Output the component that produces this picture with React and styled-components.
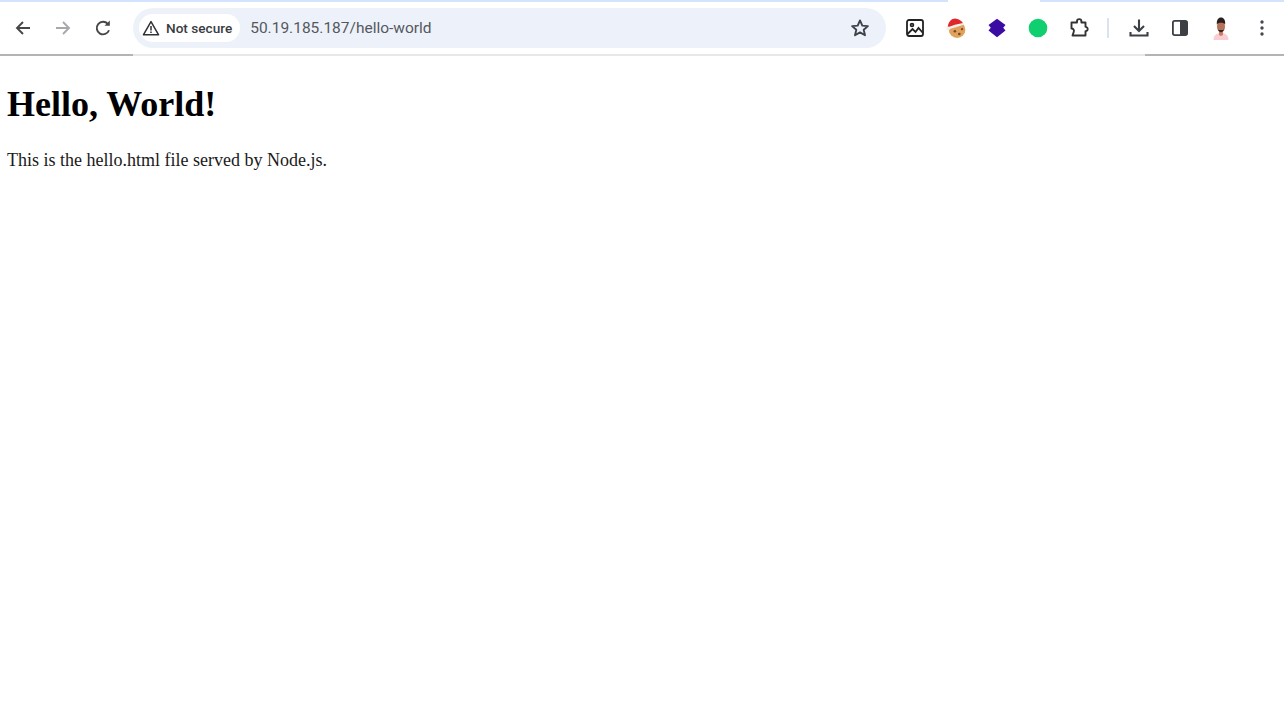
import styled, { createGlobalStyle } from "styled-components";

const GlobalStyle = createGlobalStyle`
  html, body {
    margin: 0;
    padding: 0;
    background: #fff;
  }
`;

const Page = styled.div`
  width: 1284px;
  height: 724px;
  overflow: hidden;
  background: #fff;
`;

const TabStrip = styled.div`
  height: 2px;
  display: grid;
  grid-template-columns: 948px 92px 1fr;
  background: #d3e3fd;
`;

const ActiveTab = styled.div`
  grid-column: 2;
  background: #fff;
`;

const Toolbar = styled.div`
  height: 52px;
  display: flex;
  align-items: center;
  padding: 0 0 0 3px;
  box-sizing: border-box;
  background: #fff;
`;

const Divider = styled.div`
  height: 2px;
  display: grid;
  grid-template-columns: 133px 1012px 1fr;
`;

const DividerPart = styled.div`
  background: ${(p) => (p.$dark ? "#b4b4b4" : "#e8e8e8")};
`;

const NavButton = styled.div`
  width: 40px;
  height: 40px;
  flex: none;
  display: flex;
  align-items: center;
  justify-content: center;
  margin-right: ${(p) => p.$gap || 0}px;
  color: ${(p) => p.$color || "#474747"};
`;

const Omnibox = styled.div`
  width: 753px;
  height: 40px;
  flex: none;
  margin: 0 9px 0 10px;
  padding: 0 6px;
  box-sizing: border-box;
  display: flex;
  align-items: center;
  border-radius: 20px;
  background: #edf2fa;
`;

const SecurityChip = styled.div`
  height: 28px;
  padding: 0 8px 0 3px;
  display: flex;
  align-items: center;
  gap: 6px;
  border-radius: 14px;
  background: #fff;
  font: 500 13.6px "Roboto", sans-serif;
  color: #3a3c41;
`;

const Url = styled.div`
  flex: 1;
  margin-left: 10px;
  font: 400 15.5px "Roboto", sans-serif;
  color: #55585d;
`;

const Separator = styled.div`
  width: 2px;
  height: 20px;
  flex: none;
  margin: 0 10px 0 8px;
  background: #d8e2f3;
`;

const Content = styled.main`
  padding: 0 7px;
  font-family: "Liberation Serif", "Times New Roman", serif;
  color: #000;
`;

const Heading = styled.h1`
  margin: 27px 0 0;
  font-size: 36px;
  line-height: 42px;
  font-weight: 700;
`;

const Paragraph = styled.p`
  margin: 25px 0 0;
  font-size: 18px;
  line-height: 21px;
  color: #1a1a1a;
`;

const Arrow = ({ back }) => (
  <svg width="18" height="18" viewBox="0 0 18 18" fill="none" stroke="currentColor" strokeWidth="1.9">
    {back ? <path d="M16 9H3M9 3L3 9l6 6" /> : <path d="M2 9h13M9 3l6 6-6 6" />}
  </svg>
);

const Reload = () => (
  <svg width="18" height="18" viewBox="0 0 18 18" fill="none" stroke="currentColor" strokeWidth="1.9">
    <path d="M15 11.200A6.300 6.300 0 1 1 13.800 4.900" />
    <path d="M15.800 1.500v5.300h-5.300z" fill="currentColor" stroke="none" />
  </svg>
);

const Warning = () => (
  <svg width="18" height="16" viewBox="0 0 18 16" fill="none" stroke="#2f3136" strokeWidth="1.5">
    <path d="M9 1.600L1.400 14.800h15.200z" strokeLinejoin="round" />
    <path d="M9 6v4.600M9 11.500v1.500" />
  </svg>
);

const Star = () => (
  <svg width="20" height="20" viewBox="0 0 20 20" fill="none" stroke="#3f4247" strokeWidth="1.9">
    <path d="M10 2.400l2.300 5.200 5.600.5-4.200 3.700 1.300 5.500-5-2.900-5 2.900 1.300-5.500L2.100 8.100l5.600-.5z" strokeLinejoin="round" />
  </svg>
);

const ImageIcon = () => (
  <svg width="20" height="20" viewBox="0 0 20 20" fill="none" stroke="#222" strokeWidth="1.8">
    <rect x="2" y="2" width="16" height="16" rx="2" />
    <circle cx="7" cy="7" r="1.400" />
    <path d="M2.500 16l5-5 3 3 3-4 4.500 5" />
  </svg>
);

const Cookie = () => (
  <svg width="22" height="22" viewBox="0 0 20 20">
    <circle cx="11" cy="11.500" r="7.500" fill="#dfa25c" />
    <circle cx="9" cy="13" r="1.200" fill="#7a4a20" />
    <circle cx="13" cy="15.500" r="1.200" fill="#7a4a20" />
    <circle cx="15.500" cy="11" r="1.100" fill="#7a4a20" />
    <path d="M2.500 9C3 4 6.500 1 10 1.500c3 .5 5.500 2 6.500 4.500L8 9z" fill="#e0282a" />
    <path d="M2 9.500l7-2.500 7.500-1.500.5 1.500-8 2.500-5 1.500z" fill="#f4efe9" />
    <circle cx="2.800" cy="10.500" r="1.800" fill="#f4efe9" />
  </svg>
);

const Layers = () => (
  <svg width="20" height="20" viewBox="0 0 20 20" fill="#3a0ca3">
    <path d="M10 .8L18.500 7 16.200 9.800l2.300 2.700L10 19.200 1.500 12.500l2.300-2.700L1.500 7z" />
  </svg>
);

const GreenDot = () => (
  <svg width="20" height="20" viewBox="0 0 20 20">
    <circle cx="10" cy="10" r="9.300" fill="#0fcf6e" />
  </svg>
);

const Puzzle = () => (
  <svg width="20" height="20" viewBox="0 0 20 20" fill="none" stroke="#333" strokeWidth="1.900">
    <path d="M2.500 4.500H8V3.300a2.200 2.200 0 0 1 4.400 0v1.200h4.100v4.300h.6a2.300 2.300 0 0 1 0 4.400h-.6v4.300H3.500l1.300-3.800c.7-2-.9-3.400-2.300-3.200z" strokeLinejoin="round" />
  </svg>
);

const Download = () => (
  <svg width="20" height="20" viewBox="0 0 20 20" fill="none" stroke="#3c3f44" strokeWidth="2.100">
    <path d="M10 1.500v11M5 8l5 5 5-5M1.500 14v3.500h17V14" />
  </svg>
);

const SidePanel = () => (
  <svg width="20" height="20" viewBox="0 0 20 20">
    <rect x="2.900" y="2.900" width="14.200" height="14.200" rx="1.800" fill="none" stroke="#3c3f44" strokeWidth="1.800" />
    <rect x="10" y="2.900" width="7.100" height="14.200" rx="1" fill="#3c3f44" />
  </svg>
);

const Avatar = () => (
  <svg width="24" height="24" viewBox="0 0 24 24">
    <path d="M4.500 24c0-4.500 3-7 7.500-7s7.500 2.500 7.500 7z" fill="#f9cdd2" />
    <path d="M10 15h4v4l-2 1-2-1z" fill="#c4806c" />
    <ellipse cx="12" cy="10.500" rx="4" ry="6" fill="#b5725a" />
    <path d="M7.800 8.500C7.500 3 10 1.500 12 1.500s4.500 1.500 4.200 7C15 6 9 6 7.800 8.500z" fill="#2a1f1c" />
    <path d="M9 13.500c1 3.500 5 3.500 6 0l-1 .5h-4z" fill="#3a2620" />
  </svg>
);

const Dots = () => (
  <svg width="6" height="18" viewBox="0 0 6 18" fill="#45484d">
    <circle cx="3" cy="3" r="1.700" />
    <circle cx="3" cy="9" r="1.700" />
    <circle cx="3" cy="15" r="1.700" />
  </svg>
);

export default function App() {
  return (
    <Page>
      <GlobalStyle />
      <TabStrip>
        <ActiveTab />
      </TabStrip>
      <Toolbar>
        <NavButton><Arrow back /></NavButton>
        <NavButton $color="#a6a8ab"><Arrow /></NavButton>
        <NavButton><Reload /></NavButton>
        <Omnibox>
          <SecurityChip>
            <Warning />
            Not secure
          </SecurityChip>
          <Url>50.19.185.187/hello-world</Url>
          <NavButton><Star /></NavButton>
        </Omnibox>
        <NavButton $gap={1}><ImageIcon /></NavButton>
        <NavButton $gap={1}><Cookie /></NavButton>
        <NavButton $gap={1}><Layers /></NavButton>
        <NavButton $gap={1}><GreenDot /></NavButton>
        <NavButton><Puzzle /></NavButton>
        <Separator />
        <NavButton $gap={1}><Download /></NavButton>
        <NavButton $gap={1}><SidePanel /></NavButton>
        <NavButton $gap={1}><Avatar /></NavButton>
        <NavButton><Dots /></NavButton>
      </Toolbar>
      <Divider>
        <DividerPart $dark />
        <DividerPart />
        <DividerPart $dark />
      </Divider>
      <Content>
        <Heading>Hello, World!</Heading>
        <Paragraph>This is the hello.html file served by Node.js.</Paragraph>
      </Content>
    </Page>
  );
}
